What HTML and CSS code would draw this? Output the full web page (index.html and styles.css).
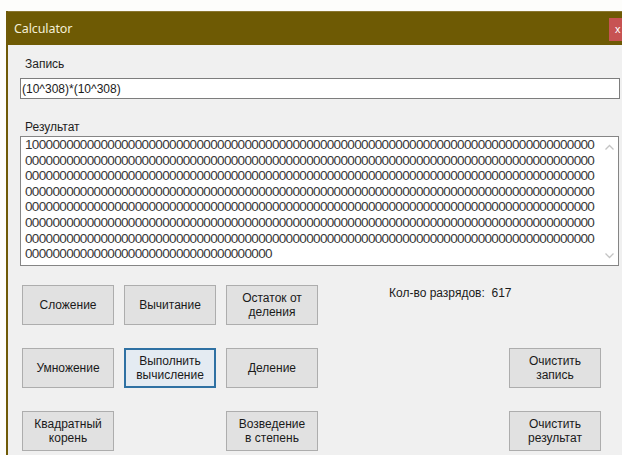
FILE: index.html
```html
<!DOCTYPE html>
<html lang="ru">
<head>
<meta charset="utf-8">
<title>Calculator</title>
<link rel="stylesheet" href="styles.css">
</head>
<body>
<div class="window">
  <div class="titlebar">
    <span class="title">Calculator</span>
    <span class="close">x</span>
  </div>
  <div class="client">
    <label class="caption" for="entry">Запись</label>
    <input id="entry" class="entry" type="text" value="(10^308)*(10^308)">
    <div class="caption caption-result">Результат</div>
    <div class="result">
      <div class="result-text">10000000000000000000000000000000000000000000000000000000000000000000000000000000000
00000000000000000000000000000000000000000000000000000000000000000000000000000000000
00000000000000000000000000000000000000000000000000000000000000000000000000000000000
00000000000000000000000000000000000000000000000000000000000000000000000000000000000
00000000000000000000000000000000000000000000000000000000000000000000000000000000000
00000000000000000000000000000000000000000000000000000000000000000000000000000000000
00000000000000000000000000000000000000000000000000000000000000000000000000000000000
000000000000000000000000000000000000</div>
      <div class="vscroll">
        <svg class="arrow" width="17" height="17" viewBox="0 0 17 17"><path d="M4.5 10.5 L8.5 6.5 L12.5 10.5" fill="none" stroke="#c4c4c4" stroke-width="1.3"/></svg>
        <svg class="arrow" width="17" height="17" viewBox="0 0 17 17"><path d="M4.5 6.5 L8.5 10.5 L12.5 6.5" fill="none" stroke="#c4c4c4" stroke-width="1.3"/></svg>
      </div>
    </div>
    <div class="actions">
      <button class="btn">Сложение</button>
      <button class="btn">Вычитание</button>
      <button class="btn">Остаток от<br>деления</button>
      <div class="digits">Кол-во разрядов:&nbsp; 617</div>

      <button class="btn">Умножение</button>
      <button class="btn btn-focus">Выполнить<br>вычисление</button>
      <button class="btn">Деление</button>
      <button class="btn col-last">Очистить<br>запись</button>

      <button class="btn">Квадратный<br>корень</button>
      <button class="btn col-3">Возведение<br>в степень</button>
      <button class="btn col-last">Очистить<br>результат</button>
    </div>
  </div>
</div>
</body>
</html>
```

FILE: styles.css
```css
html, body {
  margin: 0;
  padding: 0;
  overflow: hidden;
  background: #fdfdfb;
}

body {
  width: 622px;
  height: 455px;
  font-family: "Liberation Sans", Arial, sans-serif;
  font-size: 12px;
  color: #1b1b1b;
}

/* the form window runs past the right edge of the viewport */
.window {
  margin: 11px 0 0 6px;
  width: 640px;
  height: 460px;
  border-left: 2px solid #6f5a06;
  background: #f0f0f0;
}

.titlebar {
  height: 34px;
  display: flex;
  align-items: center;
  background: #6e5a04;
  border-top: 1px solid #8a7630;
  box-sizing: border-box;
}

.title {
  margin-left: 6px;
  font-family: "Noto Sans", "Open Sans", sans-serif;
  font-size: 12.5px;
  color: #f4efd6;
  letter-spacing: -0.1px;
}

.close {
  margin-left: auto;
  margin-right: 7px;
  margin-top: 2px;
  width: 32px;
  height: 23px;
  background: #c75353;
  color: #ffffff;
  font-size: 11px;
  line-height: 22px;
  padding-left: 6px;
  box-sizing: border-box;
}

.client {
  display: flex;
  flex-direction: column;
  padding: 12px 0 0 12px;
}

.caption {
  line-height: 15px;
  margin-left: 5px;
  color: #1e1e1e;
}

.entry {
  margin: 6px 0 0 0;
  width: 600px;
  height: 21px;
  box-sizing: border-box;
  border: 1px solid #7d7d7d;
  background: #ffffff;
  padding: 0 1px;
  font-family: "Liberation Sans", Arial, sans-serif;
  font-size: 12px;
  color: #1b1b1b;
  outline: none;
}

.caption-result {
  margin-top: 21px;
}

.result {
  margin-top: 1px;
  width: 599px;
  height: 130px;
  box-sizing: border-box;
  border: 1px solid #858585;
  background: #ffffff;
  display: flex;
}

.result-text {
  flex: 1;
  padding-left: 4px;
  white-space: pre;
  font-family: "Liberation Sans", Arial, sans-serif;
  font-size: 13.5px;
  letter-spacing: -0.65px;
  line-height: 15.6px;
  color: #383838;
  overflow: hidden;
}

.vscroll {
  width: 17px;
  display: flex;
  flex-direction: column;
  justify-content: space-between;
  padding: 2px 0 1px;
}

.arrow {
  display: block;
}

.actions {
  margin: 19px 0 0 2px;
  width: 579px;
  display: grid;
  grid-template-columns: 92px 92px 92px 1fr 92px;
  grid-auto-rows: 40px;
  column-gap: 10px;
  row-gap: 23px;
}

.btn {
  margin: 0;
  padding: 0;
  border: 1px solid #adadad;
  background: #e1e1e1;
  font-family: "Liberation Sans", Arial, sans-serif;
  font-size: 12px;
  line-height: 14px;
  color: #1a1a1a;
  text-align: center;
}

.btn-focus {
  border: 2px solid #2f71a3;
  background: #e4ebf2;
}

.col-3 {
  grid-column: 3;
}

.col-last {
  grid-column: 5;
}

.digits {
  grid-column: 4 / span 2;
  padding: 1px 0 0 61px;
  line-height: 14px;
  white-space: nowrap;
}
```
